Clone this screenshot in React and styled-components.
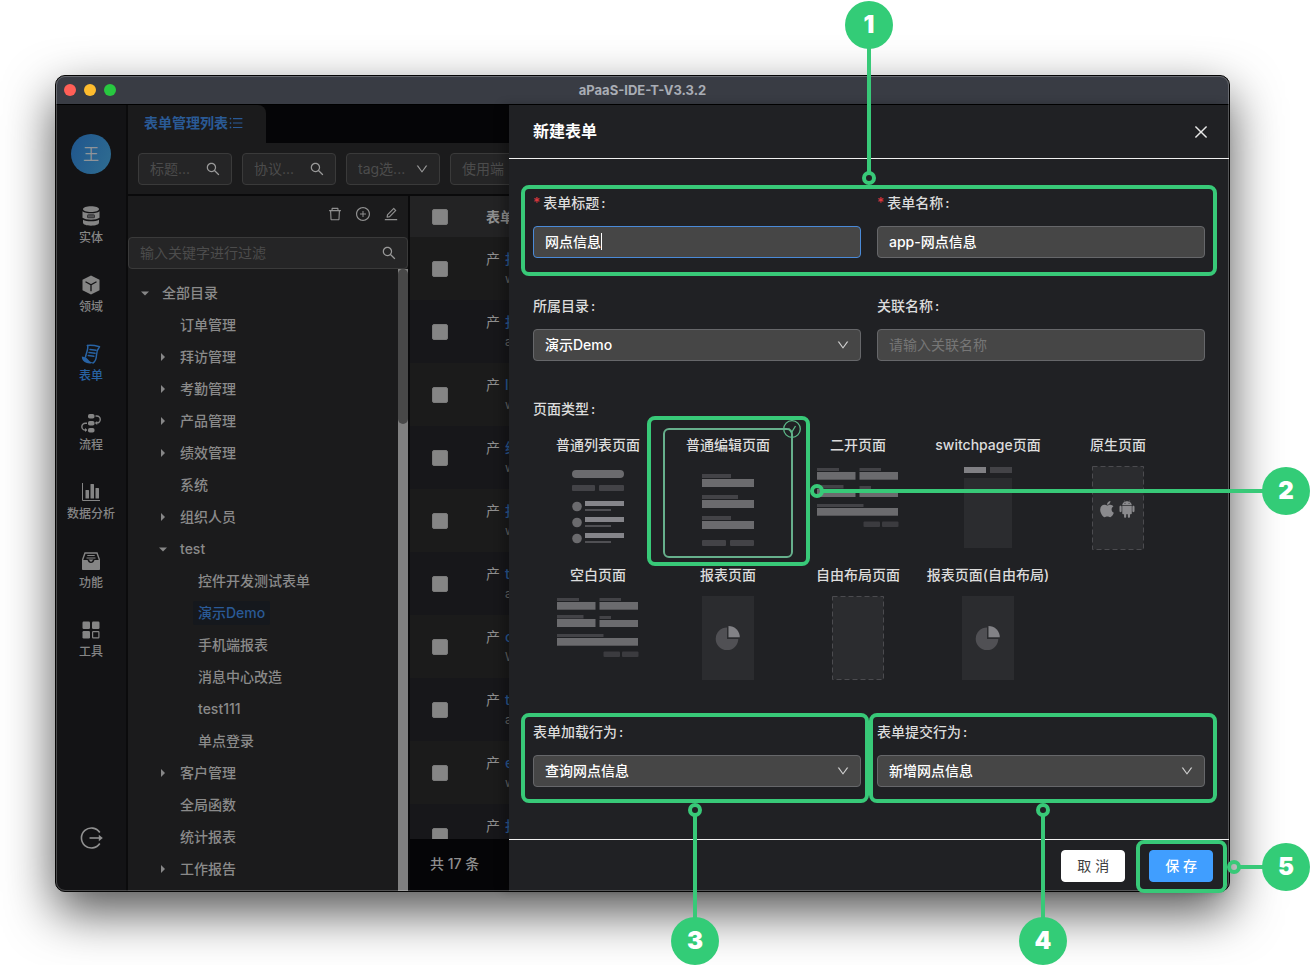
import React from "react";
import styled, { createGlobalStyle, css } from "styled-components";
import {
  AiOutlineSearch,
  AiOutlineDown,
  AiOutlineDelete,
  AiOutlinePlusCircle,
  AiOutlineEdit,
  AiOutlineUnorderedList,
  AiOutlineClose,
  AiFillApple,
  AiFillAndroid,
} from "react-icons/ai";

const GREEN = "#38c978";
const LINK = "#2a5a96";

const GlobalStyle = createGlobalStyle`
  *, *::before, *::after { box-sizing: border-box; }
  body {
    margin: 0;
    background: #fff;
    font-family: Inter, "Noto Sans CJK SC", sans-serif;
    font-size: 14px;
    line-height: 22px;
  }
  button, input, select { font: inherit; }
  button { cursor: pointer; }
  svg { display: block; flex: none; }
`;

const Page = styled.div`
  display: flex;
  min-height: 100vh;
  padding: 75px 80px 73px 55px;
`;

const Window = styled.div`
  position: relative;
  flex: 1;
  min-width: 0;
  display: flex;
  flex-direction: column;
  border: 1px solid #050505;
  border-radius: 10px;
  background: #131315;
  box-shadow: 0 20px 50px rgba(0, 0, 0, 0.68);
  &::after {
    content: "";
    position: absolute;
    inset: 0;
    z-index: 1;
    border: 1px solid rgba(255, 255, 255, 0.24);
    border-radius: 9px;
    pointer-events: none;
  }
`;

const TitleBar = styled.header`
  position: relative;
  display: flex;
  align-items: center;
  justify-content: center;
  height: 29px;
  border-bottom: 1px solid #000;
  border-radius: 9px 9px 0 0;
  background: #393c44;
  color: #a9adb5;
  font-size: 13px;
  font-weight: 700;
`;

const Lights = styled.div`
  position: absolute;
  left: 8px;
  display: flex;
  gap: 8px;
`;

const Light = styled.span`
  width: 12px;
  height: 12px;
  border-radius: 50%;
  background: ${(p) => p.$color};
`;

const Body = styled.div`
  position: relative;
  flex: 1;
  display: flex;
  min-width: 0;
`;

const Rail = styled.nav`
  width: 72px;
  flex: none;
  display: flex;
  flex-direction: column;
  align-items: center;
  padding: 29px 0 41px;
  border-right: 2px solid #0b0b0c;
  border-radius: 0 0 0 9px;
  background: #131315;
`;

const Avatar = styled.div`
  width: 40px;
  height: 40px;
  margin-bottom: 32px;
  border-radius: 50%;
  background: linear-gradient(115deg, #1f558d, #2f6d91);
  color: #8f9499;
  font-size: 16px;
  line-height: 40px;
  text-align: center;
`;

const RailList = styled.ul`
  list-style: none;
  margin: 0;
  padding: 0;
  display: flex;
  flex-direction: column;
  gap: 28px;
`;

const RailLink = styled.a`
  display: flex;
  flex-direction: column;
  align-items: center;
  gap: 3px;
  color: ${(p) => (p.$active ? "#2863a4" : "#858585")};
  font-size: 12px;
  font-weight: 500;
  line-height: 18px;
  text-decoration: none;
`;

const IconButton = styled.button`
  padding: 0;
  border: 0;
  background: none;
  color: ${(p) => p.$color || "#909090"};
`;

const RailExit = styled(IconButton)`
  margin-top: auto;
`;

const Main = styled.main`
  flex: 1;
  min-width: 0;
  display: flex;
  flex-direction: column;
  overflow: hidden;
  border-radius: 0 0 9px 0;
`;

const TabBar = styled.div`
  height: 38px;
  background: #050507;
`;

const Tab = styled.button`
  display: flex;
  align-items: center;
  width: 138px;
  height: 38px;
  padding: 0 16px 2px;
  border: 0;
  border-radius: 0 8px 0 0;
  background: #1b1b1c;
  color: ${LINK};
  font-weight: 700;
  white-space: nowrap;
`;

const Toolbar = styled.div`
  display: flex;
  gap: 10px;
  padding: 10px 10px 9px;
  border-bottom: 2px solid #0a0a0b;
  background: #1b1b1c;
`;

const DimBox = styled.div`
  display: flex;
  align-items: center;
  flex: none;
  width: ${(p) => p.$width || "94px"};
  height: 32px;
  padding: 0 10px 0 11px;
  border: 1px solid #3a3a3a;
  border-radius: 4px;
  background: #252526;
  color: #999;
`;

const DimInput = styled.input`
  flex: 1;
  min-width: 0;
  width: 0;
  padding: 0;
  border: 0;
  outline: 0;
  background: none;
  color: #909090;
  &::placeholder { color: #4c4c4c; opacity: 1; }
`;

const Split = styled.div`
  flex: 1;
  display: flex;
  background: #1b1b1c;
`;

const TreePane = styled.aside`
  width: 280px;
  flex: none;
  display: flex;
  flex-direction: column;
`;

const TreeTools = styled.div`
  display: flex;
  justify-content: flex-end;
  align-items: center;
  gap: 12px;
  height: 41px;
  padding: 0 9px 5px 0;
`;

const TreeScroll = styled.div`
  flex: 1;
  display: flex;
`;

const TreeList = styled.ul`
  flex: 1;
  list-style: none;
  margin: 0;
  padding: 8px 0 0 10px;
`;

const TreeItem = styled.li`
  display: flex;
  align-items: center;
  gap: 6px;
  height: 32px;
  padding-left: ${(p) => p.$level * 18}px;
`;

const Caret = styled.span`
  width: 13px;
  display: flex;
  justify-content: center;
`;

const TreeLabel = styled.button`
  height: 24px;
  padding: 0 5px;
  border: 0;
  border-radius: 2px;
  background: ${(p) => (p.$active ? "#15181d" : "none")};
  color: ${(p) => (p.$active ? LINK : "#8a8a8a")};
  font-weight: 500;
`;

const ScrollTrack = styled.div`
  width: 10px;
  background: #808080;
`;

const ScrollThumb = styled.div`
  height: 155px;
  border-radius: 5px;
  background: #484848;
`;

const TablePane = styled.section`
  flex: 1;
  min-width: 0;
  display: flex;
  flex-direction: column;
  border-left: 2px solid #0a0a0b;
`;

const TableClip = styled.div`
  flex: 1 1 0px;
  min-height: 0;
  overflow: hidden;
`;

const Table = styled.table`
  width: 100%;
  border-collapse: collapse;
  text-align: left;
`;

const HeadRow = styled.tr`
  height: 41px;
  background: #232324;
  color: #8f8f8f;
`;

const Row = styled.tr`
  height: 63px;
  background: ${(p) => (p.$odd ? "#17171a" : "#1b1b1b")};
`;

const Th = styled.th`
  width: ${(p) => p.$width || "auto"};
  padding: ${(p) => p.$pad || "0"};
  font-weight: 700;
`;

const Td = styled.td`
  padding: ${(p) => p.$pad || "0"};
`;

const Tick = styled.input`
  appearance: none;
  display: block;
  width: 16px;
  height: 16px;
  margin: 0;
  border: 1px solid #7a7a7a;
  border-radius: 2px;
  background: #858585;
`;

const Cell = styled.div`
  display: flex;
  gap: 5px;
  padding-bottom: 2px;
  color: #8f8f8f;
`;

const CellText = styled.div`
  display: flex;
  flex-direction: column;
`;

const CellLink = styled.a`
  color: ${LINK};
  font-weight: 500;
  text-decoration: none;
`;

const CellSub = styled.span`
  color: #686868;
  font-size: 12px;
  line-height: 18px;
`;

const Total = styled.div`
  height: 52px;
  padding: 0 20px;
  background: #050507;
  color: #8f8f8f;
  font-weight: 500;
  line-height: 50px;
`;

const Drawer = styled.section`
  position: absolute;
  top: 0;
  right: 0;
  bottom: 0;
  width: 720px;
  display: flex;
  flex-direction: column;
  border-radius: 0 0 9px 0;
  background: #202124;
  color: #dcdcdc;
  box-shadow: -6px 0 10px rgba(0, 0, 0, 0.25);
`;

const DrawerHead = styled.div`
  display: flex;
  align-items: center;
  justify-content: space-between;
  height: 54px;
  padding: 0 19px 0 24px;
  border-bottom: 1px solid #f0f0f0;
`;

const DrawerTitle = styled.h2`
  margin: 0;
  padding-bottom: 2px;
  color: #fff;
  font-size: 16px;
  font-weight: 700;
  line-height: 24px;
`;

const Form = styled.form`
  flex: 1;
  display: flex;
  flex-direction: column;
  padding: 33px 24px 0;
`;

const FormRow = styled.div`
  position: relative;
  display: grid;
  grid-template-columns: 1fr 1fr;
  gap: 16px;
  margin-bottom: 37px;
`;

const FieldBox = styled.div`
  position: relative;
  display: flex;
  flex-direction: column;
  gap: 12px;
  min-width: 0;
`;

const Label = styled.label`
  font-weight: 500;
  ${(p) =>
    p.$required &&
    css`
      &::before {
        content: "*";
        margin-right: 3px;
        color: #d9363e;
      }
    `}
`;

const Colon = styled.span`
  margin-left: 2px;
`;

const ControlWrap = styled.div`
  position: relative;
  display: grid;
`;

const controlCss = css`
  width: 100%;
  height: 32px;
  padding: 0 11px;
  border: 1px solid ${(p) => (p.$focused ? "#4a8ad8" : "#66676a")};
  border-radius: 4px;
  outline: 0;
  background: #464646;
  color: #fff;
  font-weight: 500;
`;

const Input = styled.input`
  ${controlCss}
  padding-bottom: 2px;
  &::placeholder { color: #767676; opacity: 1; font-weight: 400; }
`;

const Select = styled.select`
  ${controlCss}
  appearance: none;
`;

const SelectArrow = styled.span`
  position: absolute;
  top: 9px;
  right: 11px;
  color: #d0d0d0;
  pointer-events: none;
`;

const TextCaret = styled.span`
  position: absolute;
  top: 7px;
  left: 68px;
  width: 1px;
  height: 17px;
  background: #fff;
`;

const TypeSet = styled.fieldset`
  margin: 0 0 33px;
  padding: 0;
  border: 0;
  min-width: 0;
`;

const TypeLegend = styled.legend`
  padding: 0;
  margin-bottom: 8px;
  font-weight: 500;
`;

const TypeGrid = styled.div`
  display: flex;
  flex-wrap: wrap;
`;

const TypeCard = styled.label`
  position: relative;
  width: 130px;
  height: 130px;
  padding-top: 4px;
  border: 2px solid ${(p) => (p.$checked ? "#66b08c" : "transparent")};
  border-radius: 6px;
  font-weight: 500;
  text-align: center;
  white-space: nowrap;
`;

const HiddenRadio = styled.input`
  position: absolute;
  opacity: 0;
  margin: 0;
  pointer-events: none;
`;

const CardName = styled.span`
  display: flex;
  justify-content: center;
`;

const CardBadge = styled.span`
  position: absolute;
  top: -11px;
  right: -11px;
  color: #5cb888;
`;

const DrawerFoot = styled.div`
  display: flex;
  justify-content: flex-end;
  gap: 24px;
  height: 52px;
  padding: 10px 16px 0;
  border-top: 1px solid #f0f0f0;
`;

const SaveSlot = styled.div`
  position: relative;
`;

const Button = styled.button`
  height: 32px;
  padding: 0 15px;
  border: 1px solid ${(p) => (p.$primary ? "#409eff" : "#fff")};
  border-radius: 4px;
  background: ${(p) => (p.$primary ? "#409eff" : "#fff")};
  color: ${(p) => (p.$primary ? "#fff" : "#404040")};
  font-weight: ${(p) => (p.$primary ? 500 : 400)};
  line-height: 22px;
`;

const HighlightBox = styled.div`
  position: absolute;
  inset: ${(p) => p.$inset};
  z-index: 2;
  border: 4px solid ${GREEN};
  border-radius: 8px;
  pointer-events: none;
`;

const placements = {
  top: css`
    bottom: 100%;
    left: 50%;
    flex-direction: column-reverse;
    height: ${(p) => p.$length}px;
    margin-bottom: 4px;
    transform: translateX(-50%);
  `,
  bottom: css`
    top: 100%;
    left: 50%;
    flex-direction: column;
    height: ${(p) => p.$length}px;
    margin-top: 4px;
    transform: translateX(-50%);
  `,
  right: css`
    left: 100%;
    top: 50%;
    width: ${(p) => p.$length}px;
    height: 48px;
    margin: -24px 0 0 4px;
  `,
};

const CalloutBox = styled.div`
  position: absolute;
  display: flex;
  align-items: center;
  ${(p) => placements[p.$side]}
`;

const Ring = styled.span`
  flex: none;
  width: 14px;
  height: 14px;
  border: 4px solid ${GREEN};
  border-radius: 50%;
`;

const Line = styled.span`
  flex: 1;
  min-width: 4px;
  min-height: 4px;
  max-height: ${(p) => (p.$side === "right" ? "4px" : "none")};
  margin: ${(p) => (p.$side === "right" ? "0 -1px" : "-1px 0")};
  align-self: center;
  background: ${GREEN};
`;

const Badge = styled.span`
  flex: none;
  width: 48px;
  height: 48px;
  border-radius: 50%;
  background: #33cc77;
  color: #fff;
  font-size: 24px;
  font-weight: 900;
  line-height: 48px;
  text-align: center;
`;

function Highlight({ inset, side, length, number }) {
  return (
    <HighlightBox $inset={inset}>
      <CalloutBox $side={side} $length={length}>
        <Ring />
        <Line $side={side} />
        <Badge>{number}</Badge>
      </CalloutBox>
    </HighlightBox>
  );
}

const RailSvg = ({ children }) => (
  <svg width="20" height="20" viewBox="0 0 20 20" fill="currentColor" aria-hidden="true">
    {children}
  </svg>
);

const railIcons = {
  entity: (
    <RailSvg>
      <path d="M2 3.2C2 1.400 5.500.3 10 .3s8 1.100 8 2.900c0 1.600-3.500 2.800-8 2.800S2 4.800 2 3.200Z" />
      <path d="M1.500 5.300C3.200 6.700 6.300 7.300 10 7.300s6.800-.6 8.500-2v6.500c-1.700 1.300-4.800 1.900-8.500 1.900s-6.800-.6-8.500-1.900Z" />
      <path d="M2 13.700c1.900 1 4.700 1.500 8 1.500s6.100-.5 8-1.500v3.100c0 1.700-3.500 2.900-8 2.900s-8-1.200-8-2.900Z" />
      <rect x="6" y="8.300" width="8" height="4" rx="1.500" fill="#333336" />
      <path d="M8 9.300v2M10 9.300v2M12 9.300v2" stroke="#808080" strokeWidth=".8" />
    </RailSvg>
  ),
  domain: (
    <RailSvg>
      <path d="m10 .5 8.500 4.300v10.400L10 19.500l-8.500-4.300V4.800Z" />
      <path d="m4.500 6.800 5.500 3 5.500-3M10 9.800v6.400" fill="none" stroke="#131315" strokeWidth="1.300" />
    </RailSvg>
  ),
  form: (
    <RailSvg>
      <g fill="none" stroke="currentColor" strokeWidth="1.500" strokeLinejoin="round" strokeLinecap="round">
        <path d="M6.500 1.500c3.500-.6 7.500 0 12 1.200-2 2.300-2.800 5-3 8.300-.2 4-1 6.500-3.500 8" />
        <path d="M6.500 1.500C7.800 4 5.500 8 4.500 13" />
        <path d="M9 5.500l6 .8M8 8.500l6 .8M7.300 11.500l5.500.8" />
      </g>
      <path d="M.8 12.500c3.500.3 5.200 1.500 6.700 3.500 1.200 1.500 2.500 2.300 4.700 2.300-1.500 1.300-4 1.500-6.400.8C2.500 18 .7 15.500.8 12.500Z" />
    </RailSvg>
  ),
  flow: (
    <RailSvg>
      <rect x="7" y="1" width="6.500" height="4.500" rx="1.800" />
      <rect x="7" y="8" width="6.500" height="4.500" rx="1.800" />
      <rect x="7" y="15" width="6.500" height="4.500" rx="1.800" />
      <g fill="none" stroke="currentColor" strokeWidth="1.400">
        <path d="M14.500 3h1.300a3.400 3.400 0 0 1 0 6.900h-.5" />
        <path d="M6 10.200H4.300a3.400 3.400 0 0 0 0 6.900h.5" />
      </g>
      <path d="m13.800 9.900 2.400-2v4ZM6.400 17.100l-2.400-2v4Z" />
    </RailSvg>
  ),
  data: (
    <RailSvg>
      <path d="M1.500 1v17.500H19" fill="none" stroke="currentColor" strokeWidth="1" />
      <rect x="4.500" y="8" width="3.500" height="8.500" rx=".5" />
      <rect x="9.500" y="2" width="3.500" height="14.500" rx=".5" />
      <rect x="14.500" y="6" width="3.500" height="10.500" rx=".5" />
    </RailSvg>
  ),
  feature: (
    <RailSvg>
      <path d="M1.500 9 4 2h12l2.500 7" fill="none" stroke="currentColor" strokeWidth="1.400" />
      <path d="M6.300 4.500h7.400M5.500 7h9" stroke="currentColor" strokeWidth="1.200" />
      <path d="M1 9h5.500c.5 2 1.800 3 3.500 3s3-1 3.500-3H19v9.200c0 .5-.4.8-.8.8H1.800c-.4 0-.8-.3-.8-.8Z" />
      <path d="M7.500 8.500h5L10 11Z" />
    </RailSvg>
  ),
  tools: (
    <RailSvg>
      <rect x="1.500" y="1.500" width="7.500" height="7.500" rx="1.200" />
      <rect x="11" y="1.500" width="7.500" height="7.500" rx="1.200" />
      <rect x="1.500" y="11" width="7.500" height="7.500" rx="1.200" />
      <rect x="11.600" y="11.600" width="6.300" height="6.300" rx=".6" fill="none" stroke="currentColor" strokeWidth="1.200" />
    </RailSvg>
  ),
};

const railItems = [
  ["entity", "实体"],
  ["domain", "领域"],
  ["form", "表单"],
  ["flow", "流程"],
  ["data", "数据分析"],
  ["feature", "功能"],
  ["tools", "工具"],
];

const tree = [
  [0, "全部目录", "open"],
  [1, "订单管理"],
  [1, "拜访管理", "closed"],
  [1, "考勤管理", "closed"],
  [1, "产品管理", "closed"],
  [1, "绩效管理", "closed"],
  [1, "系统"],
  [1, "组织人员", "closed"],
  [1, "test", "open"],
  [2, "控件开发测试表单"],
  [2, "演示Demo"],
  [2, "手机端报表"],
  [2, "消息中心改造"],
  [2, "test111"],
  [2, "单点登录"],
  [1, "客户管理", "closed"],
  [1, "全局函数"],
  [1, "统计报表"],
  [1, "工作报告", "closed"],
];

const rows = [
  ["报", "w"],
  ["报", "a"],
  ["l", "w"],
  ["绩", "w"],
  ["报", "w"],
  ["t", "a"],
  ["c", "W"],
  ["t", "a"],
  ["e", "w"],
  ["报", "w"],
];

const MID = "#6b6b6e";
const DARK = "#434347";

const Art = ({ children }) => (
  <svg width="126" height="100" viewBox="0 0 126 100" aria-hidden="true">
    {children}
  </svg>
);

const ListArt = () => (
  <Art>
    <rect x="37" y="14" width="52" height="8" rx="4" fill={MID} />
    <rect x="37" y="29" width="23" height="6" rx="1" fill={DARK} />
    <rect x="64" y="29" width="25" height="6" rx="1" fill={DARK} />
    {[0, 16, 32].map((y) => (
      <g key={y}>
        <circle cx="42" cy={50.5 + y} r="4.800" fill={MID} />
        <rect x="50" y={45 + y} width="39" height="5" fill="#85858a" />
        <rect x="50" y={53 + y} width="26" height="2" fill="#505054" />
      </g>
    ))}
  </Art>
);

const EditArt = () => (
  <Art>
    {[[18, 29], [39, 36], [60, 29]].map(([y, w]) => (
      <g key={y}>
        <rect x="37" y={y} width={w} height="4" fill={DARK} />
        <rect x="37" y={y + 5} width="52" height="8" fill={MID} />
      </g>
    ))}
    <rect x="37" y="84" width="24" height="6" rx="1" fill={DARK} />
    <rect x="65" y="84" width="24" height="6" rx="1" fill={DARK} />
  </Art>
);

const GridArt = () => (
  <Art>
    <g fill={DARK}>
      <rect x="22" y="12" width="22" height="3" />
      <rect x="64.500" y="12" width="21.500" height="3" />
      <rect x="22" y="29" width="26.500" height="3.500" />
      <rect x="64.500" y="30" width="11.500" height="3" />
      <rect x="22" y="48" width="46.500" height="3" />
    </g>
    <g fill={MID}>
      <rect x="22" y="16" width="38.500" height="7.700" />
      <rect x="64.500" y="16" width="38.500" height="7.700" />
      <rect x="22" y="33" width="38.500" height="8" />
      <rect x="64.500" y="34" width="38.500" height="7" />
      <rect x="22" y="52" width="81" height="7.700" />
    </g>
    <g fill="#3b3b3f">
      <rect x="68.500" y="65.500" width="16.500" height="5.500" rx="1" />
      <rect x="87" y="65.500" width="16.500" height="5.500" rx="1" />
    </g>
  </Art>
);

const SwitchArt = () => (
  <Art>
    <rect x="39" y="11" width="22" height="6" fill="#808084" />
    <rect x="65" y="11" width="22" height="6" fill={DARK} />
    <rect x="39" y="22" width="48" height="70" fill="#2b2c2f" />
  </Art>
);

const DashedFrame = () => (
  <rect x="37.500" y="10.500" width="51" height="83" fill="#2b2c2f" stroke="#4b4b4f" strokeDasharray="5 3" />
);

const NativeArt = () => (
  <Art>
    <DashedFrame />
    <g color="#8a8a8d">
      <AiFillApple x="42" y="43" size={20} />
      <AiFillAndroid x="62" y="43" size={20} />
    </g>
  </Art>
);

const FreeArt = () => (
  <Art>
    <DashedFrame />
  </Art>
);

const ReportArt = () => (
  <Art>
    <rect x="37" y="10" width="52" height="84" fill="#2b2c2f" />
    <path d="M62 41.500A11.300 11.300 0 1 0 73.300 53H62Z" fill="#505054" />
    <path d="M63.500 40A11.300 11.300 0 0 1 74.800 51.300H63.500Z" fill="#828286" />
  </Art>
);

const pageTypes = [
  ["普通列表页面", ListArt],
  ["普通编辑页面", EditArt, true],
  ["二开页面", GridArt],
  ["switchpage页面", SwitchArt],
  ["原生页面", NativeArt],
  ["空白页面", GridArt],
  ["报表页面", ReportArt],
  ["自由布局页面", FreeArt],
  ["报表页面(自由布局)", ReportArt],
];

function Field({ id, label, required, children, mark }) {
  return (
    <FieldBox>
      <Label htmlFor={id} $required={required}>
        {label}
        <Colon>:</Colon>
      </Label>
      <ControlWrap>{children}</ControlWrap>
      {mark}
    </FieldBox>
  );
}

function SelectField({ id, label, value, mark }) {
  return (
    <Field id={id} label={label} mark={mark}>
      <Select id={id} defaultValue={value}>
        <option>{value}</option>
      </Select>
      <SelectArrow>
        <AiOutlineDown size={14} />
      </SelectArrow>
    </Field>
  );
}

function TreeCaret({ state }) {
  if (!state) return <Caret />;
  return (
    <Caret>
      <svg width="8" height="8" viewBox="0 0 8 8" fill="#878787" aria-hidden="true">
        <path d={state === "open" ? "M0 2.500h8L4 6.500Z" : "M2 0v8L6 4Z"} />
      </svg>
    </Caret>
  );
}

export default function App() {
  return (
    <Page>
      <GlobalStyle />
      <Window>
        <TitleBar>
          <Lights>
            <Light $color="#ff5f57" />
            <Light $color="#febc2e" />
            <Light $color="#28c840" />
          </Lights>
          aPaaS-IDE-T-V3.3.2
        </TitleBar>
        <Body>
          <Rail>
            <Avatar>王</Avatar>
            <RailList>
              {railItems.map(([key, text]) => (
                <li key={key}>
                  <RailLink href={`#${key}`} $active={key === "form"}>
                    {railIcons[key]}
                    {text}
                  </RailLink>
                </li>
              ))}
            </RailList>
            <RailExit aria-label="退出">
              <svg width="24" height="24" viewBox="0 0 24 24" fill="none" stroke="currentColor" strokeWidth="1.600" aria-hidden="true">
                <path d="M20.800 6.500A10 10 0 1 0 20.800 17.500" />
                <path d="M10.500 12h10" />
                <path d="m19.800 8.800 4 3.200-4 3.200Z" fill="currentColor" stroke="none" />
              </svg>
            </RailExit>
          </Rail>
          <Main>
            <TabBar>
              <Tab>
                表单管理列表
                <AiOutlineUnorderedList size={16} />
              </Tab>
            </TabBar>
            <Toolbar>
              <DimBox>
                <DimInput aria-label="标题" placeholder="标题..." />
                <AiOutlineSearch size={16} />
              </DimBox>
              <DimBox>
                <DimInput aria-label="协议" placeholder="协议..." />
                <AiOutlineSearch size={16} />
              </DimBox>
              <DimBox>
                <DimInput aria-label="tag" placeholder="tag选..." />
                <AiOutlineDown size={14} />
              </DimBox>
              <DimBox>
                <DimInput aria-label="使用端" placeholder="使用端" />
              </DimBox>
            </Toolbar>
            <Split>
              <TreePane>
                <TreeTools>
                  <IconButton aria-label="删除">
                    <AiOutlineDelete size={16} />
                  </IconButton>
                  <IconButton aria-label="新增">
                    <AiOutlinePlusCircle size={16} />
                  </IconButton>
                  <IconButton aria-label="编辑">
                    <AiOutlineEdit size={16} />
                  </IconButton>
                </TreeTools>
                <DimBox $width="100%">
                  <DimInput aria-label="过滤" placeholder="输入关键字进行过滤" />
                  <AiOutlineSearch size={16} />
                </DimBox>
                <TreeScroll>
                  <TreeList>
                    {tree.map(([level, text, state]) => (
                      <TreeItem key={text} $level={level}>
                        <TreeCaret state={state} />
                        <TreeLabel $active={text === "演示Demo"}>{text}</TreeLabel>
                      </TreeItem>
                    ))}
                  </TreeList>
                  <ScrollTrack>
                    <ScrollThumb />
                  </ScrollTrack>
                </TreeScroll>
              </TreePane>
              <TablePane>
                <TableClip>
                  <Table>
                    <thead>
                      <HeadRow>
                        <Th $width="76px" $pad="0 0 0 22px">
                          <Tick type="checkbox" aria-label="全选" />
                        </Th>
                        <Th>表单</Th>
                      </HeadRow>
                    </thead>
                    <tbody>
                      {rows.map(([title, sub], i) => (
                        <Row key={i} $odd={i % 2 === 1}>
                          <Td $pad="0 0 0 22px">
                            <Tick type="checkbox" aria-label={`选择第${i + 1}行`} />
                          </Td>
                          <Td>
                            <Cell>
                              产
                              <CellText>
                                <CellLink href="#row">{title}</CellLink>
                                <CellSub>{sub}</CellSub>
                              </CellText>
                            </Cell>
                          </Td>
                        </Row>
                      ))}
                    </tbody>
                  </Table>
                </TableClip>
                <Total>共 17 条</Total>
              </TablePane>
            </Split>
          </Main>
          <Drawer>
            <DrawerHead>
              <DrawerTitle>新建表单</DrawerTitle>
              <IconButton aria-label="关闭" $color="#e8e8e8">
                <AiOutlineClose size={18} />
              </IconButton>
            </DrawerHead>
            <Form>
              <FormRow>
                <Field id="title" label="表单标题" required>
                  <Input id="title" defaultValue="网点信息" $focused />
                  <TextCaret />
                </Field>
                <Field id="name" label="表单名称" required>
                  <Input id="name" defaultValue="app-网点信息" />
                </Field>
                <Highlight inset="-7px -12px -18px" side="top" length={184} number={1} />
              </FormRow>
              <FormRow>
                <SelectField id="dir" label="所属目录" value="演示Demo" />
                <Field id="alias" label="关联名称">
                  <Input id="alias" placeholder="请输入关联名称" />
                </Field>
              </FormRow>
              <TypeSet>
                <TypeLegend>
                  页面类型<Colon>:</Colon>
                </TypeLegend>
                <TypeGrid>
                  {pageTypes.map(([text, Picture, checked]) => (
                    <TypeCard key={text} $checked={checked}>
                      <HiddenRadio type="radio" name="pageType" defaultChecked={checked} />
                      <CardName>{text}</CardName>
                      <Picture />
                      {checked && (
                        <>
                          <CardBadge>
                            <svg width="20" height="20" viewBox="0 0 20 20" fill="none" stroke="currentColor" strokeWidth="1.300" aria-hidden="true">
                              <circle cx="10" cy="10" r="8.300" />
                              <path d="m6.500 9.500 3 4L13.500 7" />
                            </svg>
                          </CardBadge>
                          <Highlight inset="-14px -19px -10px -18px" side="right" length={500} number={2} />
                        </>
                      )}
                    </TypeCard>
                  ))}
                </TypeGrid>
              </TypeSet>
              <FormRow>
                <SelectField
                  id="load"
                  label="表单加载行为"
                  value="查询网点信息"
                  mark={<Highlight inset="-8px -8px -16px -12px" side="bottom" length={162} number={3} />}
                />
                <SelectField
                  id="submit"
                  label="表单提交行为"
                  value="新增网点信息"
                  mark={<Highlight inset="-8px -12px -16px -8px" side="bottom" length={162} number={4} />}
                />
              </FormRow>
            </Form>
            <DrawerFoot>
              <div>
                <Button type="button">取 消</Button>
              </div>
              <SaveSlot>
                <Button type="button" $primary>
                  保 存
                </Button>
                <Highlight inset="-10px -14px -2px -13px" side="right" length={83} number={5} />
              </SaveSlot>
            </DrawerFoot>
          </Drawer>
        </Body>
      </Window>
    </Page>
  );
}
